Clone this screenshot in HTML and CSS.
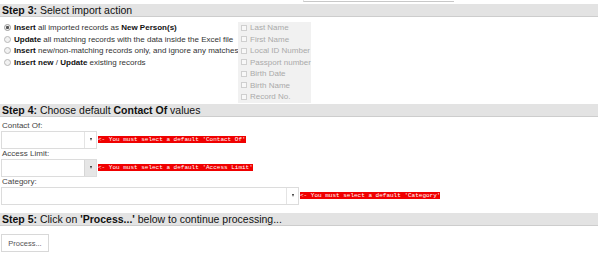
FILE: index.html
```html
<!DOCTYPE html>
<html lang="en">
<head>
    <meta charset="UTF-8">
    <meta name="viewport" content="width=device-width, initial-scale=1.0">
    <title>Import Persons</title>
    <link rel="stylesheet" href="styles.css">
</head>
<body>
    <div class="page">
        <!-- tail of the previous step -->
        <div class="prev">
            <div class="prev-field"></div>
        </div>

        <div class="step-head"><b>Step 3:</b> Select import action</div>
        <div class="step3">
            <ul class="actions">
                <li><span class="radio checked"></span><b>Insert</b> all imported records as <b>New Person(s)</b></li>
                <li><span class="radio"></span><b>Update</b> all matching records with the data inside the Excel file</li>
                <li><span class="radio"></span><b>Insert</b> new/non-matching records only, and ignore any matches</li>
                <li><span class="radio"></span><b>Insert new</b> / <b>Update</b> existing records</li>
            </ul>
            <ul class="fields">
                <li><span class="check"></span>Last Name</li>
                <li><span class="check"></span>First Name</li>
                <li><span class="check"></span>Local ID Number</li>
                <li><span class="check"></span>Passport number</li>
                <li><span class="check"></span>Birth Date</li>
                <li><span class="check"></span>Birth Name</li>
                <li><span class="check"></span>Record No.</li>
            </ul>
        </div>

        <div class="step-head"><b>Step 4:</b> Choose default <b>Contact Of</b> values</div>
        <div class="step4">
            <div class="label">Contact Of:</div>
            <div class="row">
                <div class="select">
                    <span class="select-value"></span>
                    <span class="select-arrow"></span>
                </div>
                <span class="error">&lt;- You must select a default 'Contact Of'</span>
            </div>
            <div class="label">Access Limit:</div>
            <div class="row">
                <div class="select">
                    <span class="select-value"></span>
                    <span class="select-arrow hover"></span>
                </div>
                <span class="error">&lt;- You must select a default 'Access Limit'</span>
            </div>
            <div class="label">Category:</div>
            <div class="row">
                <div class="select wide">
                    <span class="select-value"></span>
                    <span class="select-arrow"></span>
                </div>
                <span class="error">&lt;- You must select a default 'Category'</span>
            </div>
        </div>

        <div class="step-head step5"><b>Step 5:</b> Click on <b>'Process...'</b> below to continue processing...</div>
        <div class="step5-body">
            <button class="btn">Process...</button>
        </div>
    </div>
</body>
</html>
```

FILE: styles.css
```css
body {
    margin: 0;
    padding: 0;
    background-color: #ffffff;
    font-family: "Liberation Sans", Arial, sans-serif;
    color: #333;
}
.page {
    width: 598px;
}
ul {
    list-style: none;
    margin: 0;
    padding: 0;
}

/* previous step leftover */
.prev {
    height: 4px;
    padding-left: 300px;
}
.prev-field {
    width: 150px;
    height: 1px;
    margin-left: 3px;
    border-left: 1px solid #e2e2e2;
    border-bottom: 1px solid #c8c8c8;
    box-shadow: -3px 0 0 -2px #e0e0e0;
}

.step-head {
    height: 12px;
    line-height: 12px;
    padding-left: 2px;
    font-size: 10.5px;
    color: #111;
    background-color: #e3e3e3;
    border-bottom: 1px solid #cdcdcd;
    white-space: nowrap;
}

/* step 3 */
.step3 {
    display: grid;
    grid-template-columns: 238px 73px;
    padding-top: 5px;
    padding-bottom: 1px;
}
.actions {
    padding-left: 4px;
}
.actions li,
.fields li {
    height: 11.5px;
    line-height: 11.5px;
    font-size: 8px;
    white-space: nowrap;
}
.actions b {
    color: #111;
}
.radio {
    display: inline-block;
    vertical-align: -1px;
    width: 5px;
    height: 5px;
    margin-right: 3px;
    border: 1px solid #b8b8b8;
    border-radius: 50%;
    background-color: #f2f2f2;
}
.radio.checked {
    background: radial-gradient(circle, #555 0 1.3px, #f2f2f2 1.8px);
    border-color: #999;
}
.fields {
    background-color: #f1f1f1;
    padding-left: 3px;
}
.fields li {
    color: #aaa;
}
.check {
    display: inline-block;
    vertical-align: -0.5px;
    width: 4px;
    height: 4px;
    margin-right: 3px;
    border: 1px solid #cfcfcf;
    background-color: #f8f8f8;
}

/* step 4 */
.step4 {
    padding-top: 4px;
}
.label {
    height: 10px;
    line-height: 10px;
    padding-left: 2px;
    font-size: 8px;
    color: #444;
}
.row {
    display: flex;
    align-items: center;
    padding-left: 1px;
}
.select {
    display: flex;
    width: 94px;
    height: 16px;
    border: 1px solid #dcdcdc;
    background-color: #fff;
}
.select.wide {
    width: 296px;
}
.select-value {
    flex: 1;
}
.select-arrow {
    width: 11px;
    border-left: 1px solid #e4e4e4;
    display: flex;
    align-items: center;
    justify-content: center;
}
.select-arrow::after {
    content: "";
    border-left: 1.5px solid transparent;
    border-right: 1.5px solid transparent;
    border-top: 3px solid #333;
}
.select-arrow.hover {
    background-color: #e6e6e6;
    border-left-color: #d6d6d6;
}
.error {
    margin-left: 1px;
    background-color: #f00000;
    color: #fff;
    font-family: "Liberation Mono", "Courier New", monospace;
    font-size: 6px;
    line-height: 7px;
    height: 7px;
    white-space: pre;
}

/* step 5 */
.step5 {
    margin-top: 8px;
}
.step5-body {
    padding: 6px 0 0 1px;
}
.btn {
    width: 48px;
    height: 18px;
    padding: 0;
    border: 1px solid #d8d8d8;
    background-color: #fff;
    color: #555;
    font-family: "Liberation Sans", Arial, sans-serif;
    font-size: 7.5px;
}
```
